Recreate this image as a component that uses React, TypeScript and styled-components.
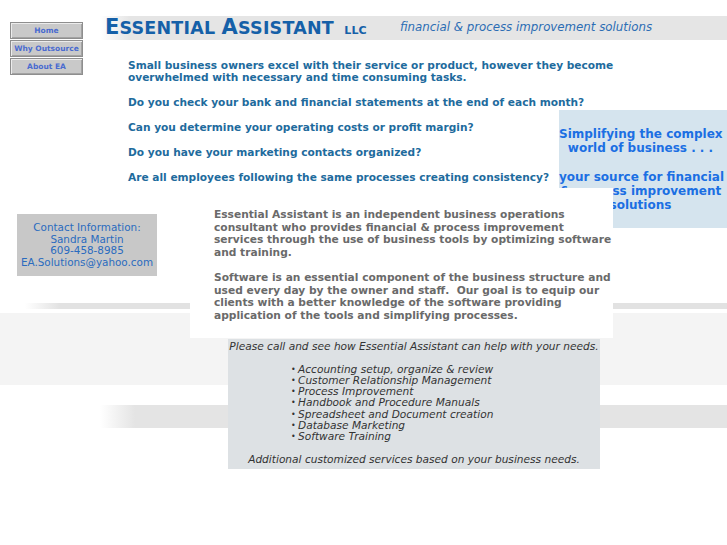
import styled, { createGlobalStyle } from "styled-components";

const GlobalStyle = createGlobalStyle`
  html, body {
    margin: 0;
    padding: 0;
    background: #fff;
  }
  body {
    font-family: "DejaVu Sans", Verdana, sans-serif;
  }
`;

const navItems = ["Home", "Why Outsource", "About EA"];

const questions = [
  "Do you check your bank and financial statements at the end of each month?",
  "Can you determine your operating costs or profit margin?",
  "Do you have your marketing contacts organized?",
  "Are all employees following the same processes creating consistency?",
];

const services = [
  "Accounting setup, organize & review",
  "Customer Relationship Management",
  "Process Improvement",
  "Handbook and Procedure Manuals",
  "Spreadsheet and Document creation",
  "Database Marketing",
  "Software Training",
];

export default function App() {
  return (
    <>
      <GlobalStyle />
      <Page>
        <Top>
          <Nav>
            {navItems.map((item) => (
              <NavButton key={item} href="#">
                {item}
              </NavButton>
            ))}
          </Nav>
          <Main>
            <Masthead>
              <Title>
                <Initial>E</Initial>SSENTIAL <Initial>A</Initial>SSISTANT <Llc>LLC</Llc>
              </Title>
              <Tagline>financial &amp; process improvement solutions</Tagline>
            </Masthead>
            <IntroRow>
              <Intro>
                <p>
                  Small business owners excel with their service or product, however they become
                  <br />
                  overwhelmed with necessary and time consuming tasks.
                </p>
                {questions.map((q) => (
                  <p key={q}>{q}</p>
                ))}
              </Intro>
              <Callout>
                <p>
                  Simplifying the complex
                  <br />
                  world of business . . .
                </p>
                <p>
                  your source for financial
                  <br />
                  &amp; process improvement
                  <br />
                  solutions
                </p>
              </Callout>
            </IntroRow>
          </Main>
        </Top>

        <Middle>
          <Contact>
            Contact Information:
            <br />
            Sandra Martin
            <br />
            609-458-8985
            <br />
            EA.Solutions@yahoo.com
          </Contact>
          <About>
            <p>
              Essential Assistant is an independent business operations
              <br />
              consultant who provides financial &amp; process improvement
              <br />
              services through the use of business tools by optimizing software
              <br />
              and training.
            </p>
            <p>
              Software is an essential component of the business structure and
              <br />
              used every day by the owner and staff.&nbsp; Our goal is to equip our
              <br />
              clients with a better knowledge of the software providing
              <br />
              application of the tools and simplifying processes.
            </p>
          </About>
        </Middle>

        <Services>
          <p>Please call and see how Essential Assistant can help with your needs.</p>
          <ServiceList>
            {services.map((s) => (
              <li key={s}>{s}</li>
            ))}
          </ServiceList>
          <p>Additional customized services based on your business needs.</p>
        </Services>
      </Page>
    </>
  );
}

const Page = styled.div`
  width: 727px;
  min-height: 545px;
  overflow: hidden;
  background:
    linear-gradient(to right, rgba(226, 226, 226, 0) 25px, #e2e2e2 60px) 0 303px / 100% 6px no-repeat,
    linear-gradient(#f4f4f4, #f4f4f4) 0 313px / 100% 72px no-repeat,
    linear-gradient(to right, #fff 100px, #e4e4e4 135px) 0 405px / 100% 23px no-repeat,
    #fff;
`;

const Top = styled.div`
  display: flex;
  align-items: flex-start;
`;

const Nav = styled.nav`
  width: 100px;
  flex: none;
  box-sizing: border-box;
  padding: 22px 0 0 10px;
  display: flex;
  flex-direction: column;
  gap: 1px;
`;

const NavButton = styled.a`
  display: block;
  width: 73px;
  height: 17px;
  box-sizing: border-box;
  background: #c9c9c9;
  border: 1px solid #8e8e8e;
  box-shadow: inset 1px 1px 0 #ececec, inset -1px -1px 0 #a3a3a3;
  color: #4a6bd0;
  font-size: 7.5px;
  font-weight: bold;
  line-height: 15px;
  text-align: center;
  text-decoration: none;
  white-space: nowrap;
`;

const Main = styled.div`
  flex: 1;
  min-width: 0;
`;

const Masthead = styled.header`
  margin-top: 16px;
  height: 24px;
  box-sizing: border-box;
  padding-left: 5px;
  display: flex;
  align-items: flex-start;
  background: linear-gradient(to right, rgba(229, 229, 229, 0), #e5e5e5 30px);
`;

const Title = styled.h1`
  margin: 1px 0 0;
  font-size: 17.5px;
  line-height: 21px;
  font-weight: bold;
  letter-spacing: 0.2px;
  color: #1560a8;
  white-space: nowrap;
`;

const Initial = styled.span`
  font-size: 21px;
`;

const Llc = styled.span`
  font-size: 11px;
  margin-left: 4px;
`;

const Tagline = styled.div`
  margin: 4px 0 0 33px;
  font-size: 11.8px;
  line-height: 14px;
  font-style: italic;
  color: #2c6db4;
  white-space: nowrap;
`;

const IntroRow = styled.div`
  display: flex;
  align-items: flex-start;
  margin-top: 19px;
`;

const Intro = styled.div`
  width: 431px;
  flex: none;
  margin-left: 28px;
  color: #1e6b9d;
  font-size: 10.6px;
  font-weight: bold;
  line-height: 12.4px;
  white-space: nowrap;

  p {
    margin: 0 0 12.4px;
  }
`;

const Callout = styled.aside`
  width: 168px;
  height: 118px;
  flex: none;
  margin-top: 51px;
  box-sizing: border-box;
  padding: 17px 5px 0 0;
  background: #d5e4ee;
  color: #1b6fe3;
  font-size: 12px;
  font-weight: bold;
  line-height: 14.2px;
  text-align: center;
  white-space: nowrap;

  p {
    margin: 0 0 14.2px;
  }
`;

const Middle = styled.div`
  display: flex;
  align-items: flex-start;
  margin-top: -40px;
`;

const Contact = styled.div`
  width: 140px;
  height: 62px;
  flex: none;
  margin: 26px 0 0 17px;
  box-sizing: border-box;
  padding-top: 8px;
  background: #c8c8c8;
  color: #2a6bbf;
  font-size: 10.4px;
  line-height: 11.5px;
  text-align: center;
  white-space: nowrap;
`;

const About = styled.section`
  position: relative;
  z-index: 1;
  width: 423px;
  height: 150px;
  flex: none;
  margin-left: 33px;
  box-sizing: border-box;
  padding: 21px 0 0 24px;
  background: #fff;
  color: #6a6a6a;
  font-size: 10.67px;
  font-weight: bold;
  line-height: 12.6px;
  white-space: nowrap;

  p {
    margin: 0 0 12.6px;
  }
`;

const Services = styled.section`
  width: 372px;
  height: 130px;
  margin: 1px 0 0 228px;
  box-sizing: border-box;
  padding-top: 2px;
  background: #dde1e4;
  color: #333;
  font-size: 10.6px;
  font-style: italic;
  line-height: 11.3px;
  text-align: center;
  white-space: nowrap;

  p {
    margin: 0;
  }
`;

const ServiceList = styled.ul`
  margin: 11.3px 0;
  padding-left: 70px;
  text-align: left;
  list-style: none;

  li::before {
    content: "•";
    display: inline-block;
    width: 8px;
    margin-left: -8px;
    transform: scale(0.75);
  }
`;
